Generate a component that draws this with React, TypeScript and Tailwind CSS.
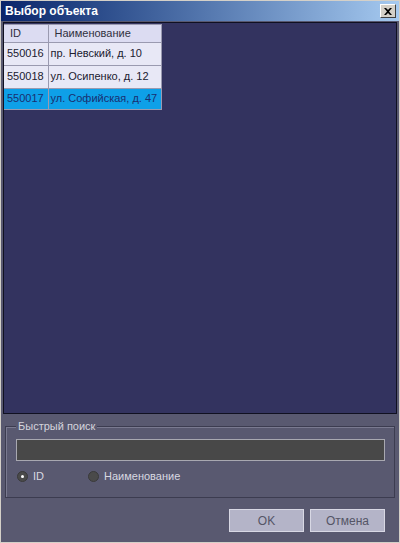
import React from "react";

const font = { fontFamily: '"Liberation Sans", Arial, sans-serif' };

const rows = [
  { id: "550016", name: "пр. Невский, д. 10", sel: false },
  { id: "550018", name: "ул. Осипенко, д. 12", sel: false },
  { id: "550017", name: "ул. Софийская, д. 47", sel: true },
];

export default function App() {
  return (
    <div
      className="w-[400px] h-[543px] bg-[#595970] border border-[#d4d0c8] flex flex-col overflow-hidden"
      style={font}
    >
      <div className="h-[20px] shrink-0 flex items-center justify-between pl-[4px] pr-[3px] bg-gradient-to-r from-[#0a246a] to-[#a6caf0]">
        <span className="text-white font-bold text-[12px] leading-none">Выбор объекта</span>
        <button className="w-[16px] h-[14px] bg-[#d4d0c8] border border-t-white border-l-white border-r-[#404040] border-b-[#404040] flex items-center justify-center p-0">
          <svg width="8" height="7" viewBox="0 0 8 7">
            <path d="M0 0h2l2 2 2-2h2L5 3.5 8 7H6L4 5 2 7H0l3-3.5z" fill="#000" />
          </svg>
        </button>
      </div>
      <div className="flex-1 flex flex-col px-[2px]">
        <div className="mt-[1px] h-[392px] bg-[#33335f] border border-[#101020] flex flex-col items-start">
          <table className="border-collapse table-fixed w-[157px] text-[11px] mt-[1px]">
            <thead>
              <tr className="h-[17px] bg-[#dcdcf2] text-[#303040]">
                <th className="w-[44px] font-normal text-left pl-[6px] border border-[#9a9ab0] border-l-0">ID</th>
                <th className="w-[113px] font-normal text-left pl-[6px] border border-[#9a9ab0]">Наименование</th>
              </tr>
            </thead>
            <tbody>
              {rows.map((r) => (
                <tr
                  key={r.id}
                  className={
                    (r.sel ? "bg-[#0ea0e8] text-[#1a2f70] h-[21px]" : "bg-[#e8e8f6] text-[#202030] h-[23px]")
                  }
                >
                  <td className="pl-[3px] border border-[#9a9ab0] border-l-0">{r.id}</td>
                  <td className="pl-[2px] border border-[#9a9ab0] whitespace-nowrap">{r.name}</td>
                </tr>
              ))}
            </tbody>
          </table>
        </div>
        <div className="relative mt-[12px] mx-[2px] h-[72px] border border-[#3c3c50] shadow-[inset_1px_1px_0_#7a7a90]">
          <span className="absolute left-[10px] -top-[8px] px-[2px] bg-[#595970] text-[#d4d4dc] text-[11px] leading-[14px]">
            Быстрый поиск
          </span>
          <div className="ml-[10px] mr-[9px] mt-[12px] h-[22px] bg-[#484848] border border-[#a8a8b0]" />
          <div className="flex items-center mt-[7px] ml-[11px] text-[11px] text-[#d8d8e0]">
            <span className="w-[11px] h-[11px] rounded-full bg-[#4a4a4a] border border-[#3a3a3a] flex items-center justify-center">
              <span className="w-[3px] h-[3px] rounded-full bg-white" />
            </span>
            <span className="ml-[5px] w-[55px]">ID</span>
            <span className="w-[11px] h-[11px] rounded-full bg-[#4a4a4a] border border-[#3a3a3a]" />
            <span className="ml-[5px]">Наименование</span>
          </div>
        </div>
        <div className="flex justify-end gap-[6px] mt-[11px] mr-[12px]">
          <button className="w-[75px] h-[23px] bg-[#b4b4c8] border border-[#d8d8e4] text-[12px] text-[#555566]">OK</button>
          <button className="w-[75px] h-[23px] bg-[#b4b4c8] border border-[#d8d8e4] text-[12px] text-[#555566]">Отмена</button>
        </div>
      </div>
    </div>
  );
}
